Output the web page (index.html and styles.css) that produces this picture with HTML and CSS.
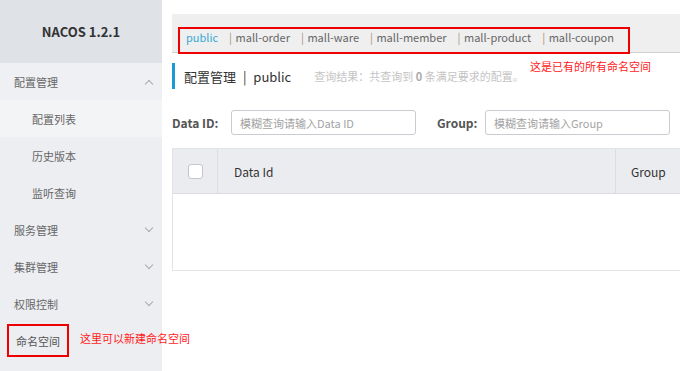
FILE: index.html
```html
<!DOCTYPE html>
<html lang="zh">
<head>
  <meta charset="UTF-8">
  <title>Nacos</title>
  <link rel="stylesheet" href="styles.css">
</head>
<body>
  <div class="layout">
    <aside class="sidebar">
      <div class="brand">NACOS 1.2.1</div>
      <ul class="menu">
        <li class="menu-item open">配置管理 <span class="arrow up"></span></li>
        <li class="sub-item active">配置列表</li>
        <li class="sub-item">历史版本</li>
        <li class="sub-item">监听查询</li>
        <li class="menu-item">服务管理 <span class="arrow"></span></li>
        <li class="menu-item">集群管理 <span class="arrow"></span></li>
        <li class="menu-item">权限控制 <span class="arrow"></span></li>
        <li class="menu-item ns-item"><span class="mark-box">命名空间</span><span class="note note-side">这里可以新建命名空间</span></li>
      </ul>
    </aside>

    <main class="main">
      <div class="ns-bar">
        <div class="ns-box">
          <span class="ns current">public</span>
          <span class="ns"><i>|</i> mall-order</span>
          <span class="ns"><i>|</i> mall-ware</span>
          <span class="ns"><i>|</i> mall-member</span>
          <span class="ns"><i>|</i> mall-product</span>
          <span class="ns"><i>|</i> mall-coupon</span>
        </div>
      </div>

      <div class="title-row">
        <div class="title">配置管理 <span class="sep">|</span> public</div>
        <div class="result">查询结果：共查询到 <b>0</b> 条满足要求的配置。</div>
        <div class="note note-top">这是已有的所有命名空间</div>
      </div>

      <div class="filters">
        <label class="f-label">Data ID:</label>
        <input class="f-input" type="text" placeholder="模糊查询请输入Data ID">
        <label class="f-label group-label">Group:</label>
        <input class="f-input" type="text" placeholder="模糊查询请输入Group">
      </div>

      <div class="table">
        <div class="thead">
          <div class="th th-check"><span class="checkbox"></span></div>
          <div class="th th-id">Data Id</div>
          <div class="th th-group">Group</div>
        </div>
        <div class="tbody"></div>
      </div>
    </main>
  </div>
</body>
</html>
```

FILE: styles.css
```css
* {
  box-sizing: border-box;
}

body {
  margin: 0;
  font-family: "Noto Sans CJK SC", "Noto Sans", sans-serif;
  background: #ffffff;
  color: #333333;
  overflow: hidden;
}

.layout {
  display: flex;
  height: 371px;
}

/* sidebar */
.sidebar {
  width: 162px;
  flex-shrink: 0;
  background: #eceef2;
}

.brand {
  height: 63px;
  background: #dfe2e7;
  display: flex;
  align-items: center;
  justify-content: center;
  font-size: 13px;
  font-weight: bold;
  color: #333333;
}

.menu {
  list-style: none;
  margin: 0;
  padding: 0;
}

.menu li {
  height: 37px;
  display: flex;
  align-items: center;
  font-size: 11px;
  color: #666666;
  position: relative;
  white-space: nowrap;
}

.menu-item {
  padding-left: 14px;
  justify-content: space-between;
  padding-right: 10px;
}

.menu-item.open {
  background: #eef0f3;
}

.sub-item {
  padding-left: 32px;
}

.sub-item.active {
  background: #f3f4f6;
}

.arrow {
  width: 6px;
  height: 6px;
  border-right: 1px solid #aaaaaa;
  border-bottom: 1px solid #aaaaaa;
  transform: rotate(45deg);
  margin-top: -4px;
}

.arrow.up {
  transform: rotate(-135deg);
  margin-top: 4px;
}

.ns-item {
  padding-left: 7px;
  justify-content: flex-start;
}

.mark-box {
  border: 2px solid #ee0000;
  height: 33px;
  width: 62px;
  display: flex;
  align-items: center;
  justify-content: center;
  color: #555555;
}

.note {
  color: #ff1a1a;
  font-size: 11px;
  white-space: nowrap;
}

.note-side {
  position: absolute;
  left: 80px;
  top: 8px;
}

/* main */
.main {
  flex: 1;
  padding-left: 10px;
  min-width: 0;
}

.ns-bar {
  margin-top: 14px;
  height: 39px;
  background: #efefef;
  border-bottom: 1px solid #cfcfcf;
  padding: 9px 0 0 6px;
}

.ns-box {
  display: inline-flex;
  align-items: center;
  gap: 11px;
  height: 27px;
  width: 452px;
  border: 2px solid #ee0000;
  padding: 0 0 7px 6px;
  font-size: 11px;
  color: #666666;
  white-space: nowrap;
}

.ns i {
  font-style: normal;
  color: #a89478;
  margin-right: 1px;
}

.ns.current {
  color: #36a9d6;
}

.title-row {
  position: relative;
  display: flex;
  align-items: center;
  height: 26px;
  margin-top: 10px;
  border-left: 3px solid #1a9bd7;
  padding-left: 9px;
  white-space: nowrap;
}

.title {
  font-size: 13px;
  color: #333333;
}

.title .sep {
  margin: 0 4px;
}

.result {
  margin-left: 23px;
  font-size: 11px;
  color: #c4c4c4;
}

.result b {
  color: #aaaaaa;
}

.note-top {
  position: absolute;
  left: 355px;
  top: -5px;
}

.filters {
  display: flex;
  align-items: center;
  margin-top: 21px;
  height: 25px;
}

.f-label {
  font-size: 12px;
  font-weight: bold;
  color: #555555;
  width: 59px;
}

.group-label {
  margin-left: 21px;
  width: 48px;
}

.f-input {
  width: 185px;
  height: 25px;
  border: 1px solid #c8cbd0;
  border-radius: 3px;
  padding: 0 8px;
  font-family: inherit;
  font-size: 11px;
}

.f-input::placeholder {
  color: #a3a3a3;
}

.table {
  margin-top: 13px;
  border: 1px solid #e3e4e8;
  border-right: none;
}

.thead {
  display: flex;
  height: 45px;
  background: #ebecf0;
  border-bottom: 1px solid #dcdde1;
}

.th {
  display: flex;
  align-items: center;
  font-size: 12px;
  color: #333333;
}

.th-check {
  width: 45px;
  justify-content: center;
  border-right: 1px solid #dcdde1;
}

.checkbox {
  width: 15px;
  height: 15px;
  background: #ffffff;
  border: 1px solid #c4c6cf;
  border-radius: 3px;
}

.th-id {
  width: 398px;
  padding-left: 16px;
  border-right: 1px solid #dcdde1;
}

.th-group {
  flex: 1;
  padding-left: 15px;
}

.tbody {
  height: 76px;
  background: #ffffff;
}
```
